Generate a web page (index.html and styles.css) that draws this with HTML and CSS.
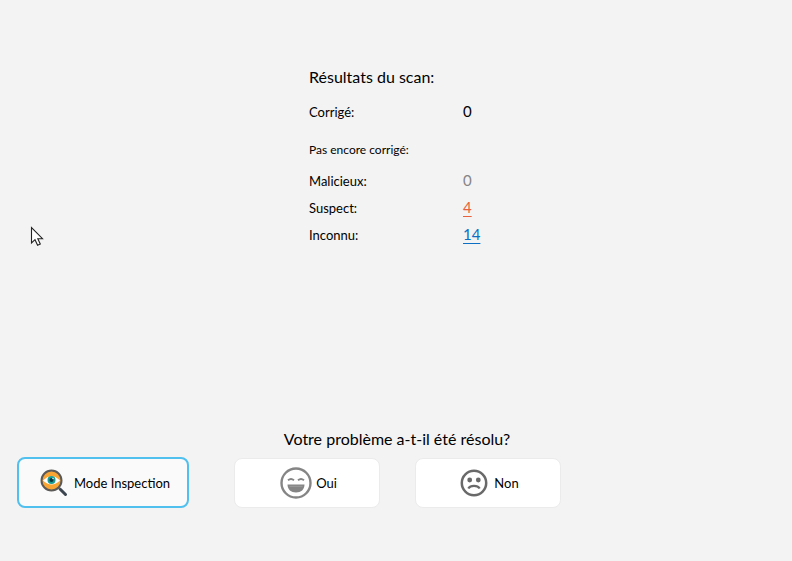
FILE: index.html
```
<!DOCTYPE html>
<html lang="fr">
<head>
  <meta charset="UTF-8">
  <meta name="viewport" content="width=device-width, initial-scale=1">
  <title>Résultats du scan</title>
  <link rel="stylesheet" href="styles.css">
</head>
<body>
  <main class="results">
    <h1 class="title">Résultats du scan:</h1>
    <dl class="stats">
      <div class="row">
        <dt>Corrigé:</dt>
        <dd>0</dd>
      </div>
    </dl>
    <h2 class="subtitle">Pas encore corrigé:</h2>
    <dl class="stats">
      <div class="row">
        <dt>Malicieux:</dt>
        <dd class="none">0</dd>
      </div>
      <div class="row">
        <dt>Suspect:</dt>
        <dd><a class="suspect" href="#suspect">4</a></dd>
      </div>
      <div class="row">
        <dt>Inconnu:</dt>
        <dd><a class="unknown" href="#unknown">14</a></dd>
      </div>
    </dl>
  </main>
  <footer class="feedback">
    <p class="question">Votre problème a-t-il été résolu?</p>
    <div class="actions">
      <button class="btn inspect" type="button">
        <svg width="28" height="28" viewBox="0 0 28 28" aria-hidden="true">
          <path d="M18 18l2.500 2.500" stroke="#777" stroke-width="2.500"/>
          <path d="M20.500 20.500l5 5" stroke="#3c4650" stroke-width="3" stroke-linecap="round"/>
          <circle cx="11.500" cy="11.500" r="10" fill="#f9a533" stroke="#5c5a58" stroke-width="2"/>
          <path d="M3 11.500Q11.500 3 20 11.500Q11.500 19.500 3 11.500z" fill="#fff"/>
          <circle cx="11.500" cy="11" r="4" fill="#199c94"/>
          <circle cx="11.500" cy="11" r="2" fill="#10343c"/>
          <circle cx="13" cy="9.500" r=".8" fill="#d9f4f0"/>
        </svg>
        Mode Inspection
      </button>
      <div class="answers">
        <button class="btn yes" type="button">
          <svg width="32" height="32" viewBox="0 0 32 32" fill="none" stroke="#858585" aria-hidden="true">
            <circle cx="16" cy="16" r="14.500" stroke-width="2.400"/>
            <path d="M8 13.300q3-2.600 6 0M18 13.300q3-2.600 6 0" stroke-width="1.800"/>
            <path d="M7.500 17.500h17c0 5-3.500 8-8.500 8s-8.500-3-8.500-8z" fill="#858585" stroke="none"/>
            <path d="M9.500 19.300h13" stroke="#a4a4a4" stroke-width=".8"/>
          </svg>
          Oui
        </button>
        <button class="btn no" type="button">
          <svg width="28" height="28" viewBox="0 0 28 28" fill="none" stroke="#696969" aria-hidden="true">
            <circle cx="14" cy="14" r="12.200" stroke-width="2.500"/>
            <circle cx="9.700" cy="11" r="2.400" fill="#696969" stroke="none"/>
            <circle cx="18.300" cy="11" r="2.400" fill="#696969" stroke="none"/>
            <path d="M8.300 19.500c2.200-3.600 9.200-3.600 11.400 0" stroke-width="2.200"/>
          </svg>
          Non
        </button>
      </div>
    </div>
  </footer>
  <svg class="pointer" width="14" height="21" viewBox="0 0 14 21" aria-hidden="true">
    <path d="M1.500 1.500v15.500l3.500-3.300 2.600 5.500 2.700-1.200-2.500-5.300h4.700z" fill="#fff" stroke="#222" stroke-width="1.100"/>
  </svg>
</body>
</html>
```
FILE: styles.css
```
* {
  box-sizing: border-box;
  margin: 0;
  padding: 0;
}
body {
  display: flex;
  flex-direction: column;
  justify-content: space-between;
  min-height: 100vh;
  padding: 65px 15px 53px 17px;
  font-family: "Trebuchet MS", Lato, "Open Sans", sans-serif;
  font-size: 13px;
  color: #000;
  background-color: #f3f3f3;
}
.results {
  width: 176px;
  margin: 0 auto;
}
.title, .question {
  font-size: 16px;
  font-weight: normal;
  line-height: 24px;
}
.title {
  margin-bottom: 10px;
  white-space: nowrap;
}
.subtitle {
  margin: 14px 0 8px;
  font-size: 12px;
  font-weight: normal;
  line-height: 20px;
}
.row {
  display: grid;
  grid-template-columns: 154px auto;
  line-height: 27px;
}
.row dd {
  font-size: 15px;
  line-height: 24px;
}
.none {
  color: #858585;
}
.row a {
  text-underline-offset: 3px;
  text-decoration-thickness: 1px;
}
.suspect {
  color: #e8613c;
}
.unknown {
  color: #0b6fc4;
}
.question {
  margin-bottom: 6px;
  text-align: center;
}
.actions {
  display: grid;
  grid-template-columns: 1fr auto 1fr;
  align-items: center;
}
.answers {
  display: flex;
  gap: 35px;
}
.btn {
  display: flex;
  align-items: center;
  justify-content: center;
  gap: 6px;
  width: 146px;
  height: 50px;
  padding-left: 4px;
  border: 1px solid #ebebeb;
  border-radius: 8px;
  font: inherit;
  color: #000;
  background-color: #fff;
  cursor: pointer;
}
.inspect {
  width: 172px;
  height: 51px;
  border: 2px solid #50c0ee;
  background-color: #fafafa;
}
.yes {
  gap: 4px;
}
/* mouse pointer over the page */
.pointer {
  position: absolute;
  top: 226px;
  left: 30px;
}
```
